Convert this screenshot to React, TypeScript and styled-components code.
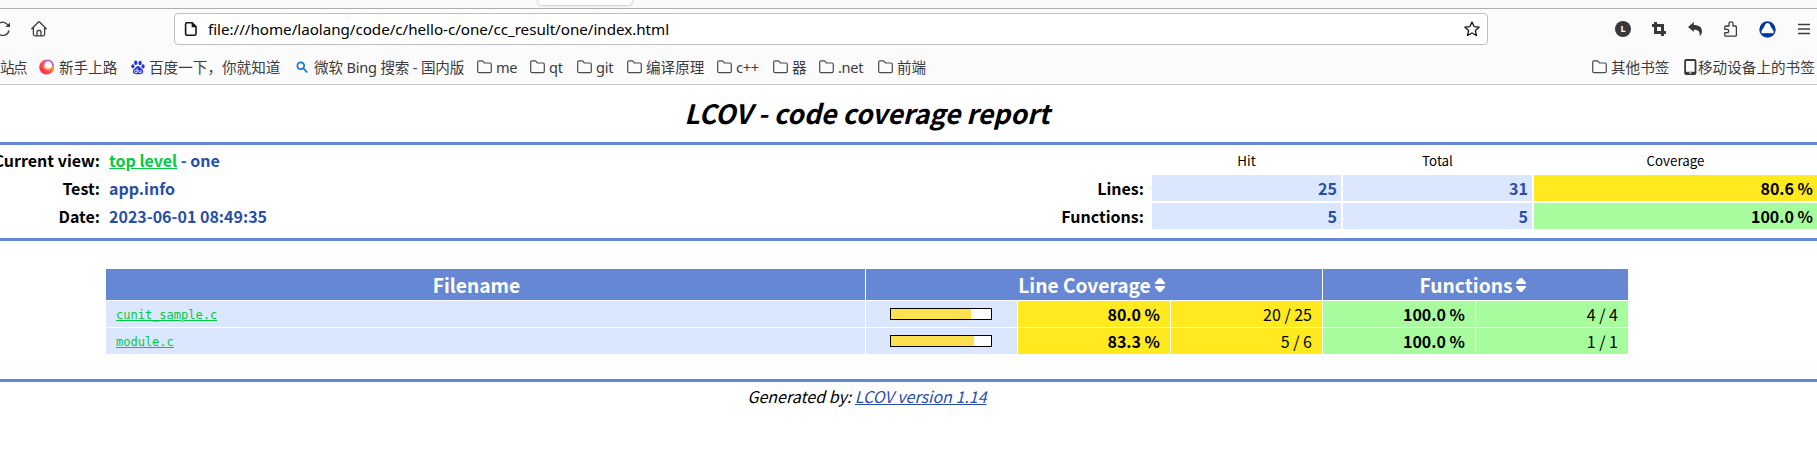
import React from "react";
import styled, { createGlobalStyle } from "styled-components";

const Global = createGlobalStyle`
  * { box-sizing: border-box; }
  body { margin: 0; background: #fff; overflow: hidden; }
`;

const Window = styled.div`
  width: 1817px;
  height: 465px;
  overflow: hidden;
  background: #fff;
  color: #000;
`;

/* ---------- browser chrome ---------- */

const Chrome = styled.header`
  height: 85px;
  background: #fbfbfb;
  border-bottom: 1px solid #c6c6c8;
  font-family: "Noto Sans", "Noto Sans CJK SC", sans-serif;
  color: #3c3c40;
`;

const TabStrip = styled.div`
  height: 9px;
  padding-left: 538px;
  border-bottom: 1px solid #aeaeb0;
  background: #fafafa;
  overflow: hidden;
`;

const TabEdge = styled.div`
  width: 94px;
  height: 5px;
  border-radius: 0 0 4px 4px;
  background: #fff;
  box-shadow: 0 0 3px rgba(0, 0, 0, 0.4);
`;

const NavBar = styled.div`
  display: flex;
  align-items: center;
  height: 40px;
`;

const NavButtons = styled.div`
  display: flex;
  align-items: center;
  width: 174px;
  gap: 20px;
`;

const UrlBox = styled.div`
  display: flex;
  align-items: center;
  width: 1314px;
  height: 32px;
  padding: 0 7px 0 8px;
  border: 1px solid #bfbfc2;
  border-radius: 4px;
  background: #fff;
  color: #15141a;
`;

const UrlText = styled.span`
  flex: 1;
  padding-left: 9px;
  font-size: 15.2px;
  line-height: 30px;
  letter-spacing: -0.03px;
  color: #000;
`;

const Extensions = styled.div`
  display: flex;
  align-items: center;
  gap: 20px;
  padding-left: 127px;
`;

const BookmarkBar = styled.div`
  display: flex;
  align-items: center;
  height: 35px;
  padding-top: 1px;
`;

const Bookmark = styled.div<{ $w: number; $gap?: number; $track?: number }>`
  display: flex;
  align-items: center;
  flex: none;
  width: ${(p) => p.$w}px;
  gap: ${(p) => p.$gap ?? 4}px;
  font-size: 14.6px;
  line-height: 22px;
  letter-spacing: ${(p) => p.$track ?? 0}px;
  white-space: nowrap;
  svg { flex: none; }
`;

const Spacer = styled.div`
  flex: 1;
`;

/* ---------- report ---------- */

const Report = styled.main`
  font-family: "Noto Sans CJK SC", sans-serif;
  font-size: 16px;
`;

const Title = styled.h1`
  margin: 0;
  height: 57px;
  padding-top: 8px;
  padding-right: 83px;
  font-size: 26.67px;
  line-height: 39px;
  font-weight: 700;
  font-style: italic;
  text-align: center;
`;

const Rule = styled.div`
  height: 3px;
  background: #6688d4;
`;

const Summary = styled.section`
  display: flex;
  justify-content: space-between;
  height: 93px;
  padding-top: 2px;
`;

const Info = styled.div`
  display: grid;
  grid-template-columns: 100px auto;
  grid-auto-rows: 26px;
  gap: 2px 9px;
  align-content: start;
  font-weight: 700;
  line-height: 26px;
  white-space: nowrap;
`;

const InfoLabel = styled.div`
  display: flex;
  justify-content: flex-end;
`;

const InfoValue = styled.div`
  color: #284fa8;
`;

const GreenLink = styled.a`
  color: #00cb40;
  text-decoration: underline;
`;

const Totals = styled.div`
  display: grid;
  grid-template-columns: 100px 189px 189px 283px;
  grid-auto-rows: 26px;
  gap: 2px;
  align-content: start;
  line-height: 26px;
`;

const TotalsHead = styled.div`
  padding-top: 1px;
  font-size: 13.33px;
  text-align: center;
`;

const TotalsLabel = styled.div`
  padding-right: 6px;
  font-weight: 700;
  text-align: right;
`;

const tones = {
  blue: "#dae7fe",
  yellow: "#ffea20",
  green: "#a7fc9d",
};
type Tone = keyof typeof tones;

const TotalsCell = styled.div<{ $tone: Tone }>`
  padding-right: 4px;
  background: ${(p) => tones[p.$tone]};
  color: ${(p) => (p.$tone === "blue" ? "#284fa8" : "#000")};
  font-weight: 700;
  text-align: right;
`;

const Files = styled.section`
  display: grid;
  grid-template-columns: 759px 151px 152px 151px 152px 152px;
  grid-template-rows: 31px 26px 26px;
  gap: 1px;
  margin: 28px 0 25px 106px;
  line-height: 26px;
`;

const FilesHead = styled.div<{ $span?: number }>`
  display: flex;
  align-items: center;
  justify-content: center;
  grid-column: span ${(p) => p.$span ?? 1};
  gap: 4px;
  padding-right: ${(p) => (p.$span ? 5 : 18)}px;
  background: #6688d4;
  color: #fff;
  font-size: 19.2px;
  line-height: 28px;
  font-weight: 700;
`;

const FileCell = styled.div`
  padding-left: 10px;
  background: #dae7fe;
  font-family: "DejaVu Sans Mono", monospace;
  font-size: 12px;
  line-height: 28.5px;
  height: 26px;
`;

const BarCell = styled.div`
  display: flex;
  justify-content: center;
  padding: 7px 1px 0 0;
  background: #dae7fe;
`;

const Bar = styled.div`
  width: 102px;
  height: 12px;
  border: 1px solid #000;
  background: #fff;
`;

const BarFill = styled.div`
  height: 10px;
  background: #ffe050;
`;

const ValueCell = styled.div<{ $tone: Tone; $bold?: boolean }>`
  padding-right: 10px;
  background: ${(p) => tones[p.$tone]};
  font-weight: ${(p) => (p.$bold ? 700 : 400)};
  text-align: right;
`;

const Footer = styled.footer`
  padding: 1px 83px 0 0;
  line-height: 26px;
  font-style: italic;
  text-align: center;
  a { color: #284fa8; text-decoration: underline; }
`;

/* ---------- icons ---------- */

const Folder = () => (
  <svg width="15" height="14" viewBox="0 0 15 14" fill="none" stroke="#4a4a4e" strokeWidth="1.2">
    <path d="M.7 11.3V2.2Q.7.8 2.1.8h3q.6 0 1 .5l1 1.3q.3.4.8.4h5q1.4 0 1.4 1.4v6.9q0 1.4-1.4 1.4H2.1Q.7 12.7.7 11.3Z" />
  </svg>
);

const Reload = () => (
  <svg width="11" height="16" viewBox="0 0 11 16" fill="none" stroke="#3c3c40" strokeWidth="1.3">
    <path d="M-1 2.4A6 6 0 0 1 8.2 5M9 9.5A6.2 6.2 0 0 1-1 13" />
    <path d="M10 1.4V6H5.4Z" fill="#3c3c40" stroke="none" />
  </svg>
);

const Home = () => (
  <svg width="16" height="16" viewBox="0 0 16 16" fill="none" stroke="#3c3c40" strokeWidth="1.3" strokeLinejoin="round" strokeLinecap="round">
    <path d="M.8 7.8 7.2 1.2q.8-.8 1.6 0l6.4 6.6M2.4 6.6v6.7q0 1.5 1.5 1.5h8.2q1.5 0 1.5-1.5V6.6M6 14.8v-4q0-1.3 1.2-1.3h1.6q1.2 0 1.2 1.3v4" />
  </svg>
);

const Page = () => (
  <svg width="16" height="16" viewBox="0 0 16 16" fill="none" stroke="#15141a" strokeWidth="1.6">
    <path d="M2.8 1.8h6.4L13 5.6v7.2q0 1.4-1.4 1.4H4q-1.4 0-1.4-1.4V3.2q0-1.4 1.4-1.4Z" />
    <path d="M8.6 1.2v5h5Z" fill="#15141a" stroke="none" />
  </svg>
);

const Star = () => (
  <svg width="16" height="16" viewBox="0 0 16 16" fill="none" stroke="#15141a" strokeWidth="1.3" strokeLinejoin="round">
    <path d="m8 1 2.1 4.6 5 .6-3.7 3.4 1 4.9L8 12l-4.4 2.5 1-4.9L.9 6.2l5-.6Z" />
  </svg>
);

const Letter = styled.span`
  display: block;
  width: 16px;
  height: 16px;
  border-radius: 50%;
  background: #38383b;
  color: #fff;
  font: 700 9px/16px "Noto Sans", sans-serif;
  text-align: center;
`;

const Crop = () => (
  <svg width="16" height="16" viewBox="0 0 16 16" fill="none" stroke="#38383b" strokeWidth="3">
    <path d="M4.5 1v10.5H15M1 4.5h10.5V15" />
  </svg>
);

const Undo = () => (
  <svg width="16" height="16" viewBox="0 0 16 16" fill="#38383b">
    <path d="M1 6 6.8 1v3C12 4 15 6.2 15 10.4c0 2-1 3.7-2.6 4.6 1-3.6-.4-6.2-5.6-6.2V11Z" />
  </svg>
);

const Puzzle = () => (
  <svg width="16" height="16" viewBox="0 0 16 16" fill="none" stroke="#3c3c40" strokeWidth="1.3" strokeLinejoin="round">
    <path d="M6 5V2.7Q6 .8 8 .8t2 1.9V5h2.4q1 0 1 1v8.2q0 1-1 1H2.8q-1 0-1-1v-2.6h2.4q1.5 0 1.5-1.6T4.2 8.4H1.8V6q0-1 1-1Z" />
  </svg>
);

const Badge = () => (
  <svg width="17" height="17" viewBox="0 0 17 17">
    <circle cx="8.5" cy="8.5" r="8.2" fill="#06389c" />
    <path d="M6 3.8Q6.8 2 8.5 2T11 3.8q.5 2 2 3.7 2.1 2.1 1.5 4.7h-12Q1.9 9.6 4 7.5 5.5 5.8 6 3.8Z" fill="#fff" />
    <path d="M4.8 12.3q.8-1.1 1.9 0 1.8 1.5 3.6 0 1.1-1.1 1.9 0Z" fill="#06389c" />
  </svg>
);

const Menu = () => (
  <svg width="16" height="16" viewBox="0 0 16 16" stroke="#3c3c40" strokeWidth="1.3">
    <path d="M2 3.5h12M2 8h12M2 12.5h12" />
  </svg>
);

const Firefox = () => (
  <svg width="16" height="16" viewBox="0 0 16 16">
    <defs>
      <linearGradient id="flame" x1="1" y1="0" x2="0.1" y2="0.8">
        <stop offset="0" stopColor="#ffbd2e" />
        <stop offset=".45" stopColor="#ff7139" />
        <stop offset="1" stopColor="#ff1f5a" />
      </linearGradient>
      <linearGradient id="ring" x1="0" y1="0" x2="1" y2="1">
        <stop offset="0" stopColor="#e13be0" />
        <stop offset="1" stopColor="#8a45ff" />
      </linearGradient>
    </defs>
    <circle cx="7.7" cy="8" r="7.5" fill="url(#flame)" />
    <circle cx="9.2" cy="6" r="4.6" fill="#fff" stroke="url(#ring)" strokeWidth="1.5" />
    <path d="M4.6 6.5a4.7 4.7 0 0 0 9.2 0" fill="none" stroke="#ffb43a" strokeWidth="1.4" />
  </svg>
);

const Paw = () => (
  <svg width="14" height="15" viewBox="0 0 15 16" fill="#2a32e0">
    <ellipse cx="5.1" cy="3" rx="1.8" ry="2.4" />
    <ellipse cx="9.7" cy="3.1" rx="1.8" ry="2.4" />
    <ellipse cx="2" cy="6.6" rx="1.7" ry="2.2" />
    <ellipse cx="12.9" cy="6.8" rx="1.7" ry="2.2" />
    <path d="M7.5 6.4c1.8 0 2.3 1.7 3.6 2.8 1.6 1.3 2.2 2.3 1.8 4-.5 2.2-3 2.2-5.4 2-2.4.2-4.9.2-5.4-2-.4-1.7.2-2.7 1.8-4 1.3-1.1 1.8-2.8 3.6-2.8Z" />
    <path d="M6.6 9v4.5H5a1.3 1.3 0 0 1 0-2.6h1.6M8.3 10.8v1.7q0 1 1 1h1.4v-2.7" fill="none" stroke="#fff" strokeWidth=".9" />
  </svg>
);

const Search = () => (
  <svg width="12" height="12" viewBox="0 0 12 12" fill="none" stroke="#1874c9" strokeWidth="1.7" strokeLinecap="round">
    <circle cx="4.8" cy="4.8" r="3.4" />
    <path d="m7.5 7.5 3.2 3.4" />
  </svg>
);

const Phone = () => (
  <svg width="13" height="16" viewBox="0 0 13 16">
    <rect x=".2" width="12.2" height="16" rx="2" fill="#38383b" />
    <path d="M2 2h8.6v10.8H2Z" fill="#fbfbfb" />
    <path d="M5 14h2.6" stroke="#fbfbfb" />
  </svg>
);

const Sort = () => (
  <svg width="10" height="14" viewBox="0 0 10 14" fill="#fff">
    <path d="M0 6V4.8L4 0h2l4 4.8V6ZM0 8v1.2L4 14h2l4-4.8V8Z" />
  </svg>
);

/* ---------- data ---------- */

const folders = [
  { label: "me", w: 53 },
  { label: "qt", w: 47 },
  { label: "git", w: 50 },
  { label: "编译原理", w: 90 },
  { label: "c++", w: 56 },
  { label: "器", w: 46 },
  { label: ".net", w: 59 },
  { label: "前端", w: 60 },
];

const totals: { label: string; hit: number; total: number; rate: string; tone: Tone }[] = [
  { label: "Lines:", hit: 25, total: 31, rate: "80.6 %", tone: "yellow" },
  { label: "Functions:", hit: 5, total: 5, rate: "100.0 %", tone: "green" },
];

const files = [
  { name: "cunit_sample.c", fill: 80, rate: "80.0 %", lines: "20 / 25", fnRate: "100.0 %", fns: "4 / 4" },
  { name: "module.c", fill: 83, rate: "83.3 %", lines: "5 / 6", fnRate: "100.0 %", fns: "1 / 1" },
];

export default function App() {
  return (
    <Window>
      <Global />
      <Chrome>
        <TabStrip>
          <TabEdge />
        </TabStrip>
        <NavBar>
          <NavButtons>
            <Reload />
            <Home />
          </NavButtons>
          <UrlBox>
            <Page />
            <UrlText>file:///home/laolang/code/c/hello-c/one/cc_result/one/index.html</UrlText>
            <Star />
          </UrlBox>
          <Extensions>
            <Letter>L</Letter>
            <Crop />
            <Undo />
            <Puzzle />
            <Badge />
            <Menu />
          </Extensions>
        </NavBar>
        <BookmarkBar>
          <Bookmark $w={39} $track={-1.5}>站点</Bookmark>
          <Bookmark $w={92}><Firefox />新手上路</Bookmark>
          <Bookmark $w={165}><Paw />百度一下，你就知道</Bookmark>
          <Bookmark $w={181} $gap={6} $track={-0.2}><Search />微软 Bing 搜索 - 国内版</Bookmark>
          {folders.map((f) => (
            <Bookmark key={f.label} $w={f.w} $track={/[a-z]/.test(f.label) ? -0.3 : 0}>
              <Folder />
              {f.label}
            </Bookmark>
          ))}
          <Spacer />
          <Bookmark $w={92}><Folder />其他书签</Bookmark>
          <Bookmark $w={133} $gap={1}><Phone />移动设备上的书签</Bookmark>
        </BookmarkBar>
      </Chrome>

      <Report>
        <Title>LCOV - code coverage report</Title>
        <Rule />
        <Summary>
          <Info>
            <InfoLabel>Current view:</InfoLabel>
            <InfoValue><GreenLink>top level</GreenLink> - one</InfoValue>
            <InfoLabel>Test:</InfoLabel>
            <InfoValue>app.info</InfoValue>
            <InfoLabel>Date:</InfoLabel>
            <InfoValue>2023-06-01 08:49:35</InfoValue>
          </Info>
          <Totals>
            <span />
            <TotalsHead>Hit</TotalsHead>
            <TotalsHead>Total</TotalsHead>
            <TotalsHead>Coverage</TotalsHead>
            {totals.map((t) => (
              <React.Fragment key={t.label}>
                <TotalsLabel>{t.label}</TotalsLabel>
                <TotalsCell $tone="blue">{t.hit}</TotalsCell>
                <TotalsCell $tone="blue">{t.total}</TotalsCell>
                <TotalsCell $tone={t.tone}>{t.rate}</TotalsCell>
              </React.Fragment>
            ))}
          </Totals>
        </Summary>
        <Rule />
        <Files>
          <FilesHead>Filename</FilesHead>
          <FilesHead $span={3}>Line Coverage<Sort /></FilesHead>
          <FilesHead $span={2}>Functions<Sort /></FilesHead>
          {files.map((f) => (
            <React.Fragment key={f.name}>
              <FileCell><GreenLink>{f.name}</GreenLink></FileCell>
              <BarCell>
                <Bar><BarFill style={{ width: `${f.fill}%` }} /></Bar>
              </BarCell>
              <ValueCell $tone="yellow" $bold>{f.rate}</ValueCell>
              <ValueCell $tone="yellow">{f.lines}</ValueCell>
              <ValueCell $tone="green" $bold>{f.fnRate}</ValueCell>
              <ValueCell $tone="green">{f.fns}</ValueCell>
            </React.Fragment>
          ))}
        </Files>
        <Rule />
        <Footer>
          Generated by: <a>LCOV version 1.14</a>
        </Footer>
      </Report>
    </Window>
  );
}
